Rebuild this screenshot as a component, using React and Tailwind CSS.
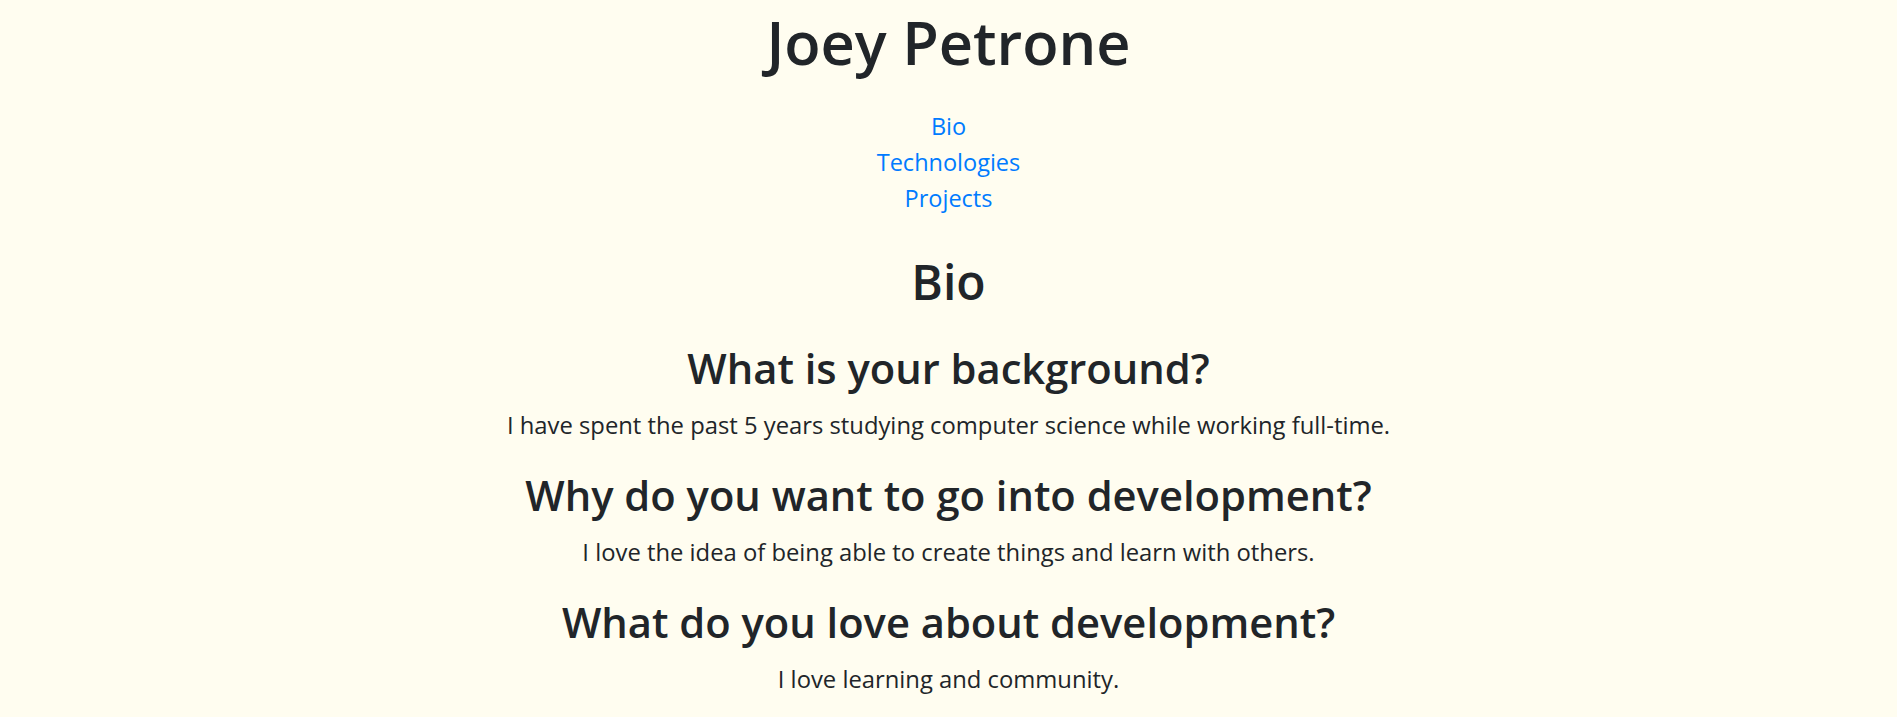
import React from "react";

const questions = [
  {
    q: "What is your background?",
    a: "I have spent the past 5 years studying computer science while working full-time.",
  },
  {
    q: "Why do you want to go into development?",
    a: "I love the idea of being able to create things and learn with others.",
  },
  {
    q: "What do you love about development?",
    a: "I love learning and community.",
  },
];

export default function App() {
  return (
    <div
      className="min-h-screen bg-[#fffdf0] text-[#212529] text-center"
      style={{ fontFamily: '"Open Sans", "Noto Sans", sans-serif' }}
    >
      <h1 className="pt-[6px] text-[59.5px] leading-[72px] font-semibold">Joey Petrone</h1>
      <nav className="mt-[30px] flex flex-col items-center text-[23.5px] leading-[36px]">
        <a href="#bio" className="text-[#007bff]">Bio</a>
        <a href="#technologies" className="text-[#007bff]">Technologies</a>
        <a href="#projects" className="text-[#007bff]">Projects</a>
      </nav>
      <section id="bio" className="mt-[32px]">
        <h2 className="text-[48px] leading-[68px] font-semibold">Bio</h2>
        {questions.map((item) => (
          <div key={item.q} className="mt-[24px]">
            <h3 className="text-[41.7px] leading-[56px] font-semibold">{item.q}</h3>
            <p className="mt-[11px] text-[23.8px] leading-[36px]">{item.a}</p>
          </div>
        ))}
      </section>
    </div>
  );
}
